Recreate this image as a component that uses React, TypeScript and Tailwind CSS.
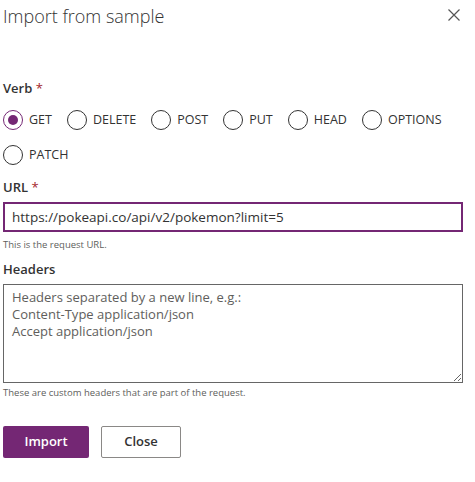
import { useState } from 'react';

const verbs = ['GET', 'DELETE', 'POST', 'PUT', 'HEAD', 'OPTIONS', 'PATCH'];

function Radio({ label, checked, onSelect }: { label: string; checked: boolean; onSelect: () => void }) {
    return (
        <label onClick={onSelect} className="flex items-center gap-[6px] mr-[15px] cursor-pointer">
            <span
                className={`w-[20px] h-[20px] rounded-full border flex items-center justify-center ${
                    checked ? 'border-[#742774]' : 'border-[#333333]'
                }`}
            >
                {checked && <span className="w-[10px] h-[10px] rounded-full bg-[#742774]" />}
            </span>
            <span className="text-[12.5px] text-[#333333]">{label}</span>
        </label>
    );
}

export default function App() {
    const [verb, setVerb] = useState('GET');

    return (
        <div className="w-[475px] h-[482px] bg-white px-[3px] font-['Open_Sans',sans-serif] text-[#333333]">
            <div className="flex items-start justify-between pt-[3px]">
                <h1 className="text-[18px] font-light leading-[26px] text-[#333333]">Import from sample</h1>
                <svg width="12" height="12" viewBox="0 0 12 12" className="mt-[6px] mr-[12px]">
                    <path d="M0.5 0.5 L11.5 11.5 M11.5 0.5 L0.5 11.5" stroke="#555" strokeWidth="1.2" />
                </svg>
            </div>

            <div className="mt-[50px] text-[13px] font-semibold leading-[18px]">
                Verb <span className="text-[#a4262c] font-normal">*</span>
            </div>
            <div className="flex flex-wrap gap-y-[15px] mt-[13px]">
                {verbs.map((v) => (
                    <Radio key={v} label={v} checked={verb === v} onSelect={() => setVerb(v)} />
                ))}
            </div>

            <div className="mt-[13px] text-[13px] font-semibold leading-[18px]">
                URL <span className="text-[#a4262c] font-normal">*</span>
            </div>
            <div className="mt-[6px] w-[460px] h-[30px] border-2 border-[#742774] flex items-center px-[7px]">
                <input
                    defaultValue="https://pokeapi.co/api/v2/pokemon?limit=5"
                    className="w-full outline-none text-[13.5px] text-[#333333] bg-transparent"
                />
            </div>
            <p className="text-[9.5px] text-[#605e5c] mt-[6px] leading-[14px]">This is the request URL.</p>

            <div className="mt-[8px] text-[13px] font-semibold leading-[18px]">Headers</div>
            <textarea
                placeholder={'Headers separated by a new line, e.g.:\nContent-Type application/json\nAccept application/json'}
                className="block mt-[6px] w-[460px] h-[99px] border border-[#666666] px-[8px] py-[4px] text-[13px] leading-[17px] outline-none placeholder:text-[#605e5c]"
            />
            <p className="text-[9.5px] text-[#605e5c] mt-[3px] leading-[14px]">
                These are custom headers that are part of the request.
            </p>

            <div className="flex gap-[12px] mt-[26px]">
                <button className="w-[86px] h-[32px] rounded-[2px] bg-[#742774] text-white text-[13px] font-semibold">
                    Import
                </button>
                <button className="w-[80px] h-[32px] rounded-[2px] border border-[#8a8886] bg-white text-[#333333] text-[13px] font-semibold">
                    Close
                </button>
            </div>
        </div>
    );
}
